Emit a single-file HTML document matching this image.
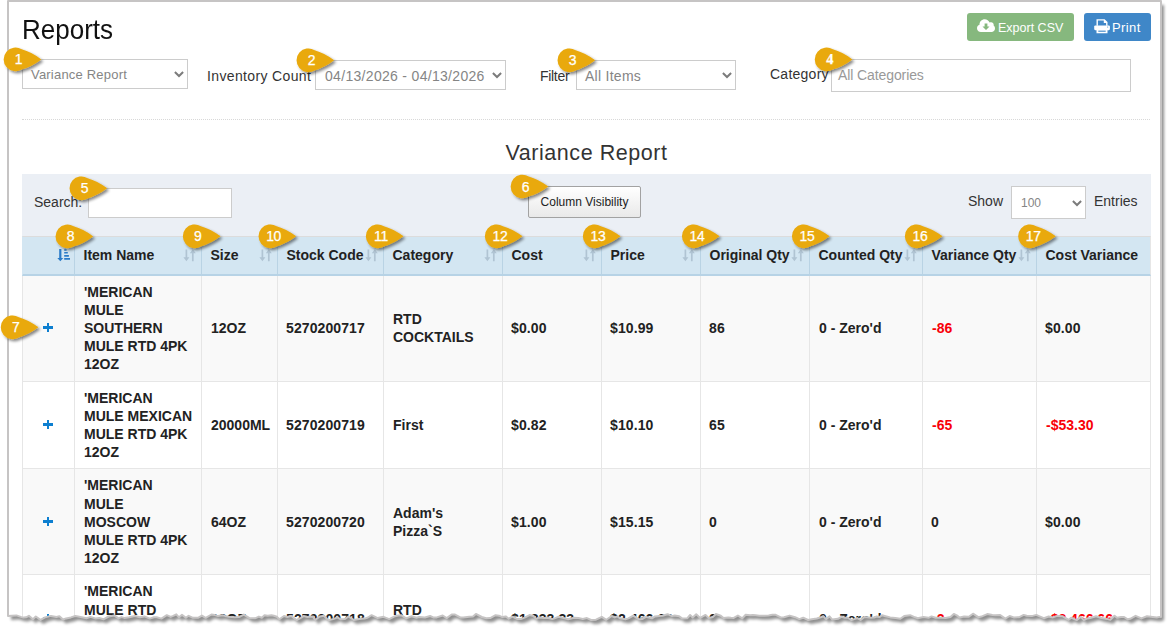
<!DOCTYPE html>
<html><head><meta charset="utf-8">
<style>
*{box-sizing:border-box;margin:0;padding:0}
html,body{width:1172px;height:633px;overflow:hidden;background:#fff}
body{font-family:"Liberation Sans",sans-serif;color:#333;position:relative}
.abs{position:absolute}
svg.full{position:absolute;left:0;top:0;width:1172px;height:633px;overflow:visible}
#page{position:absolute;left:0;top:0;width:1172px;height:633px;overflow:hidden;background:#fff;clip-path:path("M8.0 1.0 L1161.0 1.0 L1161.0 617.0 L1160.6 616.6 L1156.8 617.5 L1150.8 616.7 L1147.0 616.3 L1141.4 618.4 L1135.6 615.8 L1130.2 618.8 L1127.7 619.3 L1124.1 617.0 L1121.1 616.9 L1117.0 617.8 L1114.5 615.7 L1110.3 619.8 L1107.0 618.9 L1101.4 618.0 L1096.0 616.3 L1090.2 618.1 L1087.2 618.4 L1083.9 620.0 L1080.7 616.9 L1076.6 620.1 L1071.2 617.7 L1068.7 619.8 L1062.8 616.3 L1057.1 615.9 L1053.0 617.4 L1048.7 616.5 L1043.8 618.2 L1039.0 616.1 L1036.3 614.9 L1031.8 616.1 L1026.7 615.8 L1023.7 614.9 L1018.9 617.3 L1013.7 617.4 L1009.6 616.0 L1005.3 618.6 L1000.2 615.0 L995.2 615.2 L992.4 615.1 L987.3 614.1 L982.5 616.2 L978.3 617.2 L973.0 613.7 L968.8 616.8 L964.1 616.6 L959.6 617.6 L956.8 615.4 L953.8 613.9 L950.5 617.0 L945.6 617.9 L941.0 617.7 L935.7 617.8 L931.5 616.4 L928.5 617.8 L923.4 617.1 L917.8 618.2 L915.1 617.3 L910.1 615.2 L904.2 616.1 L900.3 618.8 L895.3 617.9 L890.2 617.4 L885.6 616.2 L882.0 615.3 L879.4 617.1 L876.6 616.5 L874.1 617.6 L870.9 617.7 L866.7 617.2 L864.2 617.1 L860.6 620.0 L857.3 618.1 L851.4 620.1 L847.9 617.7 L844.9 617.8 L841.4 616.8 L837.9 618.8 L832.3 619.6 L829.5 616.4 L826.1 619.1 L823.4 616.2 L820.7 617.2 L816.8 618.5 L811.8 619.3 L808.1 620.0 L803.2 617.7 L799.3 619.1 L795.1 617.2 L789.7 615.6 L784.0 617.2 L780.8 617.4 L775.7 614.8 L772.3 614.8 L768.6 615.4 L764.4 615.8 L759.2 615.8 L755.6 615.2 L753.0 615.0 L750.1 615.3 L745.7 614.7 L742.3 618.3 L737.9 615.5 L733.8 617.9 L731.0 617.8 L728.2 617.5 L723.5 618.1 L720.8 615.7 L715.9 614.0 L713.0 616.9 L708.5 617.9 L705.5 614.9 L700.2 617.9 L696.2 614.3 L692.7 617.4 L690.1 615.0 L687.2 618.3 L682.0 618.4 L679.2 616.3 L674.6 615.5 L672.0 616.1 L667.6 614.2 L662.5 615.7 L659.3 615.9 L655.0 616.4 L652.0 618.3 L646.0 616.9 L642.1 619.1 L638.9 619.3 L633.3 615.6 L628.4 618.4 L625.4 619.3 L620.2 618.3 L617.4 616.4 L614.7 617.4 L611.7 616.0 L606.3 619.8 L601.8 616.8 L596.0 619.7 L591.1 620.0 L586.9 618.1 L582.8 618.9 L578.5 618.0 L573.9 617.7 L568.2 619.2 L563.7 618.0 L558.5 616.8 L555.2 618.1 L552.3 619.1 L547.8 617.8 L544.2 617.9 L539.2 617.4 L536.1 618.9 L533.5 616.0 L529.5 615.1 L525.2 617.4 L520.9 619.1 L516.9 618.9 L512.4 616.7 L508.7 618.7 L505.7 616.4 L502.3 617.1 L499.0 615.7 L495.6 615.2 L490.2 618.1 L486.2 618.3 L481.8 617.0 L475.9 613.9 L473.0 616.4 L469.2 616.8 L463.3 617.5 L460.3 617.4 L454.6 614.4 L451.7 614.5 L446.7 618.1 L442.7 615.5 L436.8 617.4 L433.2 617.4 L430.1 616.0 L424.9 617.5 L419.2 617.0 L416.5 617.7 L411.7 616.3 L406.2 618.4 L401.5 615.3 L398.4 615.5 L395.1 616.2 L389.2 619.2 L383.5 616.8 L377.6 618.1 L374.2 616.3 L371.6 615.2 L367.9 617.5 L364.6 618.6 L359.2 619.0 L353.7 619.9 L348.4 616.5 L344.7 619.1 L340.4 619.2 L337.3 617.3 L333.9 618.9 L328.3 620.2 L324.0 615.8 L319.6 616.4 L315.2 620.1 L312.7 616.4 L307.3 616.9 L303.6 616.1 L300.8 617.8 L296.6 620.1 L291.2 616.0 L287.4 617.0 L284.0 616.0 L279.4 619.2 L276.8 616.8 L273.9 615.8 L271.4 615.3 L267.7 615.7 L264.5 615.2 L261.8 617.7 L258.9 616.6 L255.0 618.3 L249.5 618.1 L243.8 614.6 L239.0 617.1 L234.7 617.3 L228.8 616.7 L225.0 615.9 L222.5 615.2 L217.9 616.1 L214.6 614.9 L211.5 614.5 L205.7 617.8 L201.9 615.6 L198.4 617.7 L193.1 617.8 L188.6 615.8 L185.9 617.7 L182.0 614.9 L179.0 617.3 L176.3 614.3 L173.2 615.9 L170.7 616.9 L166.8 615.2 L161.4 618.6 L156.7 617.3 L154.0 617.2 L149.8 618.6 L144.4 616.4 L139.8 617.2 L134.9 616.0 L129.3 617.3 L124.2 617.9 L121.5 617.1 L118.5 618.4 L114.5 615.6 L108.6 616.5 L103.5 619.3 L99.2 618.0 L95.8 618.6 L90.6 616.9 L86.5 618.3 L82.9 617.6 L78.0 616.6 L75.3 616.0 L70.9 617.4 L66.1 618.4 L63.0 619.5 L59.4 616.2 L56.4 617.0 L50.9 615.9 L45.0 617.4 L40.5 619.9 L35.8 616.5 L32.9 619.2 L28.9 615.8 L26.1 617.3 L23.5 617.6 L20.8 616.9 L16.4 615.4 L11.6 615.7 L8.0 616.0 Z")}
h1{position:absolute;left:22px;top:15px;font-size:26px;font-weight:400;color:#111;line-height:30px;white-space:nowrap;transform:scaleY(1.055);transform-origin:0 23.7px}
.sel{position:absolute;border:1px solid #ccc;background:#fff;color:#858585;font-size:13px;line-height:29px;padding-left:8px;white-space:nowrap}
.sel svg{position:absolute;right:3.5px;top:11px}
.lbl{position:absolute;font-size:14px;color:#333;white-space:nowrap;line-height:18px}
.btn{position:absolute;color:#fff;font-size:12.5px;border-radius:3px;line-height:30px;white-space:nowrap}
#dots{position:absolute;left:22px;top:119px;width:1128px;border-top:1px dotted #d8d8d8}
h2{position:absolute;left:22px;width:1129px;top:138px;text-align:center;font-size:21.5px;letter-spacing:0.55px;font-weight:400;color:#333;line-height:31px}
#bar{position:absolute;left:22px;top:174px;width:1129px;height:63px;background:#ebeff5}
table{position:absolute;left:22px;top:236px;width:1129px;border-collapse:separate;border-spacing:0;table-layout:fixed;font-size:14px;font-weight:700;color:#222;letter-spacing:0}
th{background:#d3e6f2;height:39.65px;text-align:left;padding:0 0 1px 8.5px;border-left:1px solid #b9d3e4;border-bottom:2px solid #b7d3e6;border-top:1px solid #dcdcdc;position:relative;white-space:nowrap;vertical-align:middle}
th:first-child{border-left:1px solid #d3e6f2}
td{padding:7px 0 7px 9px;border-left:1px solid #e6e6e6;border-bottom:1px solid #e6e6e6;line-height:18.2px;vertical-align:middle}
td:last-child,th:last-child{border-right:1px solid #e6e6e6}
tr.o td{background:#f9f9f9}
.red{color:#f80008}
td.n{padding-left:8px;letter-spacing:0.1px}
th svg{position:absolute;right:4px;top:11.5px}
.plus{position:absolute;left:43px;width:10px;height:9px}
.plus:before{content:"";position:absolute;left:0;top:3.3px;width:10px;height:2.4px;background:#0d7fd0}
.plus:after{content:"";position:absolute;left:3.6px;top:0;width:2.9px;height:9px;background:#0d7fd0}
</style></head><body>
<svg class="full" style="z-index:0"><defs><filter id="fsh" x="-5%" y="-5%" width="110%" height="110%"><feGaussianBlur in="SourceAlpha" stdDeviation="1.8"/><feOffset dx="3.2" dy="4"/><feComponentTransfer><feFuncA type="linear" slope="0.44"/></feComponentTransfer></filter></defs>
<path d="M8.0 1.0 L1161.0 1.0 L1161.0 617.0 L1160.6 616.6 L1156.8 617.5 L1150.8 616.7 L1147.0 616.3 L1141.4 618.4 L1135.6 615.8 L1130.2 618.8 L1127.7 619.3 L1124.1 617.0 L1121.1 616.9 L1117.0 617.8 L1114.5 615.7 L1110.3 619.8 L1107.0 618.9 L1101.4 618.0 L1096.0 616.3 L1090.2 618.1 L1087.2 618.4 L1083.9 620.0 L1080.7 616.9 L1076.6 620.1 L1071.2 617.7 L1068.7 619.8 L1062.8 616.3 L1057.1 615.9 L1053.0 617.4 L1048.7 616.5 L1043.8 618.2 L1039.0 616.1 L1036.3 614.9 L1031.8 616.1 L1026.7 615.8 L1023.7 614.9 L1018.9 617.3 L1013.7 617.4 L1009.6 616.0 L1005.3 618.6 L1000.2 615.0 L995.2 615.2 L992.4 615.1 L987.3 614.1 L982.5 616.2 L978.3 617.2 L973.0 613.7 L968.8 616.8 L964.1 616.6 L959.6 617.6 L956.8 615.4 L953.8 613.9 L950.5 617.0 L945.6 617.9 L941.0 617.7 L935.7 617.8 L931.5 616.4 L928.5 617.8 L923.4 617.1 L917.8 618.2 L915.1 617.3 L910.1 615.2 L904.2 616.1 L900.3 618.8 L895.3 617.9 L890.2 617.4 L885.6 616.2 L882.0 615.3 L879.4 617.1 L876.6 616.5 L874.1 617.6 L870.9 617.7 L866.7 617.2 L864.2 617.1 L860.6 620.0 L857.3 618.1 L851.4 620.1 L847.9 617.7 L844.9 617.8 L841.4 616.8 L837.9 618.8 L832.3 619.6 L829.5 616.4 L826.1 619.1 L823.4 616.2 L820.7 617.2 L816.8 618.5 L811.8 619.3 L808.1 620.0 L803.2 617.7 L799.3 619.1 L795.1 617.2 L789.7 615.6 L784.0 617.2 L780.8 617.4 L775.7 614.8 L772.3 614.8 L768.6 615.4 L764.4 615.8 L759.2 615.8 L755.6 615.2 L753.0 615.0 L750.1 615.3 L745.7 614.7 L742.3 618.3 L737.9 615.5 L733.8 617.9 L731.0 617.8 L728.2 617.5 L723.5 618.1 L720.8 615.7 L715.9 614.0 L713.0 616.9 L708.5 617.9 L705.5 614.9 L700.2 617.9 L696.2 614.3 L692.7 617.4 L690.1 615.0 L687.2 618.3 L682.0 618.4 L679.2 616.3 L674.6 615.5 L672.0 616.1 L667.6 614.2 L662.5 615.7 L659.3 615.9 L655.0 616.4 L652.0 618.3 L646.0 616.9 L642.1 619.1 L638.9 619.3 L633.3 615.6 L628.4 618.4 L625.4 619.3 L620.2 618.3 L617.4 616.4 L614.7 617.4 L611.7 616.0 L606.3 619.8 L601.8 616.8 L596.0 619.7 L591.1 620.0 L586.9 618.1 L582.8 618.9 L578.5 618.0 L573.9 617.7 L568.2 619.2 L563.7 618.0 L558.5 616.8 L555.2 618.1 L552.3 619.1 L547.8 617.8 L544.2 617.9 L539.2 617.4 L536.1 618.9 L533.5 616.0 L529.5 615.1 L525.2 617.4 L520.9 619.1 L516.9 618.9 L512.4 616.7 L508.7 618.7 L505.7 616.4 L502.3 617.1 L499.0 615.7 L495.6 615.2 L490.2 618.1 L486.2 618.3 L481.8 617.0 L475.9 613.9 L473.0 616.4 L469.2 616.8 L463.3 617.5 L460.3 617.4 L454.6 614.4 L451.7 614.5 L446.7 618.1 L442.7 615.5 L436.8 617.4 L433.2 617.4 L430.1 616.0 L424.9 617.5 L419.2 617.0 L416.5 617.7 L411.7 616.3 L406.2 618.4 L401.5 615.3 L398.4 615.5 L395.1 616.2 L389.2 619.2 L383.5 616.8 L377.6 618.1 L374.2 616.3 L371.6 615.2 L367.9 617.5 L364.6 618.6 L359.2 619.0 L353.7 619.9 L348.4 616.5 L344.7 619.1 L340.4 619.2 L337.3 617.3 L333.9 618.9 L328.3 620.2 L324.0 615.8 L319.6 616.4 L315.2 620.1 L312.7 616.4 L307.3 616.9 L303.6 616.1 L300.8 617.8 L296.6 620.1 L291.2 616.0 L287.4 617.0 L284.0 616.0 L279.4 619.2 L276.8 616.8 L273.9 615.8 L271.4 615.3 L267.7 615.7 L264.5 615.2 L261.8 617.7 L258.9 616.6 L255.0 618.3 L249.5 618.1 L243.8 614.6 L239.0 617.1 L234.7 617.3 L228.8 616.7 L225.0 615.9 L222.5 615.2 L217.9 616.1 L214.6 614.9 L211.5 614.5 L205.7 617.8 L201.9 615.6 L198.4 617.7 L193.1 617.8 L188.6 615.8 L185.9 617.7 L182.0 614.9 L179.0 617.3 L176.3 614.3 L173.2 615.9 L170.7 616.9 L166.8 615.2 L161.4 618.6 L156.7 617.3 L154.0 617.2 L149.8 618.6 L144.4 616.4 L139.8 617.2 L134.9 616.0 L129.3 617.3 L124.2 617.9 L121.5 617.1 L118.5 618.4 L114.5 615.6 L108.6 616.5 L103.5 619.3 L99.2 618.0 L95.8 618.6 L90.6 616.9 L86.5 618.3 L82.9 617.6 L78.0 616.6 L75.3 616.0 L70.9 617.4 L66.1 618.4 L63.0 619.5 L59.4 616.2 L56.4 617.0 L50.9 615.9 L45.0 617.4 L40.5 619.9 L35.8 616.5 L32.9 619.2 L28.9 615.8 L26.1 617.3 L23.5 617.6 L20.8 616.9 L16.4 615.4 L11.6 615.7 L8.0 616.0 Z" fill="#000" filter="url(#fsh)"/></svg>
<div id="page">
<h1>Reports</h1>
<div class="sel" style="left:22px;top:59px;width:166px;height:30px;letter-spacing:0.2px">Variance Report<svg width="10" height="7" viewBox="0 0 10 7"><path d="M0.9 1 L5 5 L9.1 1" fill="none" stroke="#7c7c7c" stroke-width="2"/></svg></div>
<div class="lbl" style="left:207px;top:67px;letter-spacing:0.36px">Inventory Count</div>
<div class="sel" style="left:315px;top:60px;width:191px;height:30px;font-size:14px;letter-spacing:0.31px;padding-left:9px;line-height:31px">04/13/2026 - 04/13/2026<svg width="10" height="7" viewBox="0 0 10 7"><path d="M0.9 1 L5 5 L9.1 1" fill="none" stroke="#7c7c7c" stroke-width="2"/></svg></div>
<div class="lbl" style="left:540px;top:67px;letter-spacing:-0.3px">Filter</div>
<div class="sel" style="left:576px;top:60px;width:160px;height:30px;font-size:14px;letter-spacing:0.27px;padding-left:8px;line-height:31px">All Items<svg width="10" height="7" viewBox="0 0 10 7"><path d="M0.9 1 L5 5 L9.1 1" fill="none" stroke="#7c7c7c" stroke-width="2"/></svg></div>
<div class="lbl" style="left:770px;top:65px;letter-spacing:0.25px">Category</div>
<div class="sel" style="left:831px;top:59px;width:300px;height:33px;font-size:14px;line-height:30px;padding-left:6px;color:#999;letter-spacing:-0.1px">All Categories</div>
<div class="btn" style="left:967px;top:13px;width:107px;height:28px;background:#86b87e;padding-left:31px">Export CSV
<svg class="abs" style="left:10px;top:6px" width="18" height="14" viewBox="0 0 18 14"><path d="M4 13 C1.6 13 0 11.4 0 9.3 C0 7.6 1 6.3 2.5 5.8 C2.5 2.6 4.8 0.3 7.7 0.3 C10 0.3 11.8 1.6 12.6 3.6 C13.1 3.3 13.6 3.2 14.1 3.2 C15.6 3.2 16.7 4.4 16.7 5.8 C16.7 6.1 16.7 6.3 16.6 6.6 C17.5 7.2 18 8.2 18 9.4 C18 11.4 16.4 13 14.4 13 Z" fill="#fff"/><path d="M7.6 4.5 h2.8 v3 h2.1 l-3.5 3.6 l-3.5 -3.6 h2.1 z" fill="#86b87e"/></svg></div>
<div class="btn" style="left:1084px;top:13px;width:67px;height:28px;background:#3f87c8;padding-left:28px;font-size:13px;letter-spacing:0.4px">Print
<svg class="abs" style="left:9.5px;top:6px" width="16" height="15" viewBox="0 0 16 15"><path d="M2.5 6.8 V0.2 H10.6 L13.5 3.1 V6.8 H12.1 V3.9 H9.8 V1.6 H3.9 V6.8 Z" fill="#fff"/><rect x="0.2" y="6.4" width="15.7" height="4.8" rx="1.1" fill="#fff"/><path d="M2.5 10.5 H13.5 V14.3 H2.5 Z M4.3 11.4 V12.8 H11.7 V11.4 Z" fill="#fff" fill-rule="evenodd"/><circle cx="13.7" cy="8" r="0.55" fill="#3f87c8"/></svg></div>
<div id="dots"></div>
<h2>Variance Report</h2>
<div id="bar"></div>
<div class="lbl" style="left:34px;top:193px">Search:</div>
<div class="sel" style="left:88px;top:188px;width:144px;height:30px"></div>
<div class="abs" style="left:528px;top:186px;width:113px;height:32px;border:1px solid #a2a2a2;background:linear-gradient(#fff,#e9e9e9);border-radius:2px;font-size:12px;color:#222;text-align:center;line-height:30px;white-space:nowrap">Column Visibility</div>
<div class="lbl" style="left:968px;top:192px">Show</div>
<div class="sel" style="left:1011px;top:186px;width:75px;height:33px;line-height:32px;font-size:12px;padding-left:9px">100<svg style="top:13px" width="10" height="7" viewBox="0 0 10 7"><path d="M0.9 1 L5 5 L9.1 1" fill="none" stroke="#7c7c7c" stroke-width="2"/></svg></div>
<div class="lbl" style="left:1094px;top:192px">Entries</div>
<table>
<colgroup><col style="width:52px"><col style="width:127px"><col style="width:76px"><col style="width:106px"><col style="width:119px"><col style="width:99px"><col style="width:99px"><col style="width:109px"><col style="width:113px"><col style="width:114px"><col style="width:115px"></colgroup>
<tr><th><svg style="right:auto;left:34px;top:12px" width="14" height="13" viewBox="0 0 14 13"><path d="M2.2 0 h2.2 v9 h1.9 l-3 3.2 l-3 -3.2 h1.9 z M7.2 0.2 h2.4 v1.5 h-2.4 z M7.2 3 h3.6 v1.6 h-3.6 z M7.2 6 h4.7 v1.7 h-4.7 z M7.2 9 h5.8 v1.7 h-5.8 z" fill="#2a7bc8"/></svg></th><th>Item Name<svg width="14" height="13" viewBox="0 0 14 13"><path d="M3.4 0.4 V9.5 M9.8 12.2 V3" fill="none" stroke="#b0c4d3" stroke-width="1.7"/><path d="M0.4 8.3 H6.4 L3.4 12.3 Z M6.8 4.3 H12.8 L9.8 0.3 Z" fill="#b0c4d3"/></svg></th><th>Size<svg width="14" height="13" viewBox="0 0 14 13"><path d="M3.4 0.4 V9.5 M9.8 12.2 V3" fill="none" stroke="#b0c4d3" stroke-width="1.7"/><path d="M0.4 8.3 H6.4 L3.4 12.3 Z M6.8 4.3 H12.8 L9.8 0.3 Z" fill="#b0c4d3"/></svg></th><th>Stock Code<svg width="14" height="13" viewBox="0 0 14 13"><path d="M3.4 0.4 V9.5 M9.8 12.2 V3" fill="none" stroke="#b0c4d3" stroke-width="1.7"/><path d="M0.4 8.3 H6.4 L3.4 12.3 Z M6.8 4.3 H12.8 L9.8 0.3 Z" fill="#b0c4d3"/></svg></th><th>Category<svg width="14" height="13" viewBox="0 0 14 13"><path d="M3.4 0.4 V9.5 M9.8 12.2 V3" fill="none" stroke="#b0c4d3" stroke-width="1.7"/><path d="M0.4 8.3 H6.4 L3.4 12.3 Z M6.8 4.3 H12.8 L9.8 0.3 Z" fill="#b0c4d3"/></svg></th><th>Cost<svg width="14" height="13" viewBox="0 0 14 13"><path d="M3.4 0.4 V9.5 M9.8 12.2 V3" fill="none" stroke="#b0c4d3" stroke-width="1.7"/><path d="M0.4 8.3 H6.4 L3.4 12.3 Z M6.8 4.3 H12.8 L9.8 0.3 Z" fill="#b0c4d3"/></svg></th><th>Price<svg width="14" height="13" viewBox="0 0 14 13"><path d="M3.4 0.4 V9.5 M9.8 12.2 V3" fill="none" stroke="#b0c4d3" stroke-width="1.7"/><path d="M0.4 8.3 H6.4 L3.4 12.3 Z M6.8 4.3 H12.8 L9.8 0.3 Z" fill="#b0c4d3"/></svg></th><th>Original Qty<svg width="14" height="13" viewBox="0 0 14 13"><path d="M3.4 0.4 V9.5 M9.8 12.2 V3" fill="none" stroke="#b0c4d3" stroke-width="1.7"/><path d="M0.4 8.3 H6.4 L3.4 12.3 Z M6.8 4.3 H12.8 L9.8 0.3 Z" fill="#b0c4d3"/></svg></th><th>Counted Qty<svg width="14" height="13" viewBox="0 0 14 13"><path d="M3.4 0.4 V9.5 M9.8 12.2 V3" fill="none" stroke="#b0c4d3" stroke-width="1.7"/><path d="M0.4 8.3 H6.4 L3.4 12.3 Z M6.8 4.3 H12.8 L9.8 0.3 Z" fill="#b0c4d3"/></svg></th><th>Variance Qty<svg width="14" height="13" viewBox="0 0 14 13"><path d="M3.4 0.4 V9.5 M9.8 12.2 V3" fill="none" stroke="#b0c4d3" stroke-width="1.7"/><path d="M0.4 8.3 H6.4 L3.4 12.3 Z M6.8 4.3 H12.8 L9.8 0.3 Z" fill="#b0c4d3"/></svg></th><th>Cost Variance</th></tr>
<tr class="o"><td></td><td>'MERICAN<br>MULE<br>SOUTHERN<br>MULE RTD 4PK<br>12OZ</td><td>12OZ</td><td class="n">5270200717</td><td>RTD<br>COCKTAILS</td><td class="n">$0.00</td><td class="n">$10.99</td><td class="n">86</td><td>0 - Zero'd</td><td class="red">-86</td><td class="n">$0.00</td></tr>
<tr><td></td><td>'MERICAN<br>MULE MEXICAN<br>MULE RTD 4PK<br>12OZ</td><td>20000ML</td><td class="n">5270200719</td><td>First</td><td class="n">$0.82</td><td class="n">$10.10</td><td class="n">65</td><td>0 - Zero'd</td><td class="red">-65</td><td class="red">-$53.30</td></tr>
<tr class="o"><td></td><td>'MERICAN<br>MULE<br>MOSCOW<br>MULE RTD 4PK<br>12OZ</td><td>64OZ</td><td class="n">5270200720</td><td>Adam's<br>Pizza`S</td><td class="n">$1.00</td><td class="n">$15.15</td><td class="n">0</td><td>0 - Zero'd</td><td class="n">0</td><td class="n">$0.00</td></tr>
<tr><td></td><td>'MERICAN<br>MULE RTD<br>VARIETY 8PK<br>12OZ</td><td>12OZ</td><td class="n">5270200718</td><td>RTD<br>COCKTAILS</td><td class="n">$1,233.33</td><td class="n">$2,466.66</td><td class="n">2</td><td>0 - Zero'd</td><td class="red">-2</td><td class="red">-$2,466.66</td></tr>
</table>
<div class="plus" style="top:323px"></div>
<div class="plus" style="top:420px"></div>
<div class="plus" style="top:517px"></div>
<div class="plus" style="top:614px"></div>
</div>
<svg class="full" style="z-index:2"><defs><filter id="bsh" x="-30%" y="-30%" width="170%" height="170%"><feGaussianBlur in="SourceAlpha" stdDeviation="1.4" result="b"/><feOffset in="b" dx="2" dy="2.2" result="o"/><feComponentTransfer in="o" result="s"><feFuncA type="linear" slope="0.48"/></feComponentTransfer><feMerge><feMergeNode in="s"/><feMergeNode in="SourceGraphic"/></feMerge></filter></defs>
<path d="M8.0 1.0 L1161.0 1.0 L1161.0 617.0 L1160.6 616.6 L1156.8 617.5 L1150.8 616.7 L1147.0 616.3 L1141.4 618.4 L1135.6 615.8 L1130.2 618.8 L1127.7 619.3 L1124.1 617.0 L1121.1 616.9 L1117.0 617.8 L1114.5 615.7 L1110.3 619.8 L1107.0 618.9 L1101.4 618.0 L1096.0 616.3 L1090.2 618.1 L1087.2 618.4 L1083.9 620.0 L1080.7 616.9 L1076.6 620.1 L1071.2 617.7 L1068.7 619.8 L1062.8 616.3 L1057.1 615.9 L1053.0 617.4 L1048.7 616.5 L1043.8 618.2 L1039.0 616.1 L1036.3 614.9 L1031.8 616.1 L1026.7 615.8 L1023.7 614.9 L1018.9 617.3 L1013.7 617.4 L1009.6 616.0 L1005.3 618.6 L1000.2 615.0 L995.2 615.2 L992.4 615.1 L987.3 614.1 L982.5 616.2 L978.3 617.2 L973.0 613.7 L968.8 616.8 L964.1 616.6 L959.6 617.6 L956.8 615.4 L953.8 613.9 L950.5 617.0 L945.6 617.9 L941.0 617.7 L935.7 617.8 L931.5 616.4 L928.5 617.8 L923.4 617.1 L917.8 618.2 L915.1 617.3 L910.1 615.2 L904.2 616.1 L900.3 618.8 L895.3 617.9 L890.2 617.4 L885.6 616.2 L882.0 615.3 L879.4 617.1 L876.6 616.5 L874.1 617.6 L870.9 617.7 L866.7 617.2 L864.2 617.1 L860.6 620.0 L857.3 618.1 L851.4 620.1 L847.9 617.7 L844.9 617.8 L841.4 616.8 L837.9 618.8 L832.3 619.6 L829.5 616.4 L826.1 619.1 L823.4 616.2 L820.7 617.2 L816.8 618.5 L811.8 619.3 L808.1 620.0 L803.2 617.7 L799.3 619.1 L795.1 617.2 L789.7 615.6 L784.0 617.2 L780.8 617.4 L775.7 614.8 L772.3 614.8 L768.6 615.4 L764.4 615.8 L759.2 615.8 L755.6 615.2 L753.0 615.0 L750.1 615.3 L745.7 614.7 L742.3 618.3 L737.9 615.5 L733.8 617.9 L731.0 617.8 L728.2 617.5 L723.5 618.1 L720.8 615.7 L715.9 614.0 L713.0 616.9 L708.5 617.9 L705.5 614.9 L700.2 617.9 L696.2 614.3 L692.7 617.4 L690.1 615.0 L687.2 618.3 L682.0 618.4 L679.2 616.3 L674.6 615.5 L672.0 616.1 L667.6 614.2 L662.5 615.7 L659.3 615.9 L655.0 616.4 L652.0 618.3 L646.0 616.9 L642.1 619.1 L638.9 619.3 L633.3 615.6 L628.4 618.4 L625.4 619.3 L620.2 618.3 L617.4 616.4 L614.7 617.4 L611.7 616.0 L606.3 619.8 L601.8 616.8 L596.0 619.7 L591.1 620.0 L586.9 618.1 L582.8 618.9 L578.5 618.0 L573.9 617.7 L568.2 619.2 L563.7 618.0 L558.5 616.8 L555.2 618.1 L552.3 619.1 L547.8 617.8 L544.2 617.9 L539.2 617.4 L536.1 618.9 L533.5 616.0 L529.5 615.1 L525.2 617.4 L520.9 619.1 L516.9 618.9 L512.4 616.7 L508.7 618.7 L505.7 616.4 L502.3 617.1 L499.0 615.7 L495.6 615.2 L490.2 618.1 L486.2 618.3 L481.8 617.0 L475.9 613.9 L473.0 616.4 L469.2 616.8 L463.3 617.5 L460.3 617.4 L454.6 614.4 L451.7 614.5 L446.7 618.1 L442.7 615.5 L436.8 617.4 L433.2 617.4 L430.1 616.0 L424.9 617.5 L419.2 617.0 L416.5 617.7 L411.7 616.3 L406.2 618.4 L401.5 615.3 L398.4 615.5 L395.1 616.2 L389.2 619.2 L383.5 616.8 L377.6 618.1 L374.2 616.3 L371.6 615.2 L367.9 617.5 L364.6 618.6 L359.2 619.0 L353.7 619.9 L348.4 616.5 L344.7 619.1 L340.4 619.2 L337.3 617.3 L333.9 618.9 L328.3 620.2 L324.0 615.8 L319.6 616.4 L315.2 620.1 L312.7 616.4 L307.3 616.9 L303.6 616.1 L300.8 617.8 L296.6 620.1 L291.2 616.0 L287.4 617.0 L284.0 616.0 L279.4 619.2 L276.8 616.8 L273.9 615.8 L271.4 615.3 L267.7 615.7 L264.5 615.2 L261.8 617.7 L258.9 616.6 L255.0 618.3 L249.5 618.1 L243.8 614.6 L239.0 617.1 L234.7 617.3 L228.8 616.7 L225.0 615.9 L222.5 615.2 L217.9 616.1 L214.6 614.9 L211.5 614.5 L205.7 617.8 L201.9 615.6 L198.4 617.7 L193.1 617.8 L188.6 615.8 L185.9 617.7 L182.0 614.9 L179.0 617.3 L176.3 614.3 L173.2 615.9 L170.7 616.9 L166.8 615.2 L161.4 618.6 L156.7 617.3 L154.0 617.2 L149.8 618.6 L144.4 616.4 L139.8 617.2 L134.9 616.0 L129.3 617.3 L124.2 617.9 L121.5 617.1 L118.5 618.4 L114.5 615.6 L108.6 616.5 L103.5 619.3 L99.2 618.0 L95.8 618.6 L90.6 616.9 L86.5 618.3 L82.9 617.6 L78.0 616.6 L75.3 616.0 L70.9 617.4 L66.1 618.4 L63.0 619.5 L59.4 616.2 L56.4 617.0 L50.9 615.9 L45.0 617.4 L40.5 619.9 L35.8 616.5 L32.9 619.2 L28.9 615.8 L26.1 617.3 L23.5 617.6 L20.8 616.9 L16.4 615.4 L11.6 615.7 L8.0 616.0 Z" fill="none" stroke="#c6c4c4" stroke-width="2" stroke-linejoin="round"/>
<g transform="translate(15.5 59.4)"><path d="M25.8 0 Q16 -7.4 6.2 -10.1 A11.85 11.85 0 1 0 6.2 10.1 Q16 7.4 25.8 0 Z" fill="#e9a90d" filter="url(#bsh)"/><text x="3.2" y="5" text-anchor="middle" fill="#fff" stroke="#fff" stroke-width="0.25" font-family="Liberation Sans" font-size="14">1</text></g>
<g transform="translate(308.4 60.3)"><path d="M25.8 0 Q16 -7.4 6.2 -10.1 A11.85 11.85 0 1 0 6.2 10.1 Q16 7.4 25.8 0 Z" fill="#e9a90d" filter="url(#bsh)"/><text x="3.2" y="5" text-anchor="middle" fill="#fff" stroke="#fff" stroke-width="0.25" font-family="Liberation Sans" font-size="14">2</text></g>
<g transform="translate(569.4 60.3)"><path d="M25.8 0 Q16 -7.4 6.2 -10.1 A11.85 11.85 0 1 0 6.2 10.1 Q16 7.4 25.8 0 Z" fill="#e9a90d" filter="url(#bsh)"/><text x="3.2" y="5" text-anchor="middle" fill="#fff" stroke="#fff" stroke-width="0.25" font-family="Liberation Sans" font-size="14">3</text></g>
<g transform="translate(826.6 59.4)"><path d="M25.8 0 Q16 -7.4 6.2 -10.1 A11.85 11.85 0 1 0 6.2 10.1 Q16 7.4 25.8 0 Z" fill="#e9a90d" filter="url(#bsh)"/><text x="3.2" y="5" text-anchor="middle" fill="#fff" stroke="#fff" stroke-width="0.25" font-family="Liberation Serif" font-weight="700" font-size="14.5">4</text></g>
<g transform="translate(81.4 188.3)"><path d="M25.8 0 Q16 -7.4 6.2 -10.1 A11.85 11.85 0 1 0 6.2 10.1 Q16 7.4 25.8 0 Z" fill="#e9a90d" filter="url(#bsh)"/><text x="3.2" y="5" text-anchor="middle" fill="#fff" stroke="#fff" stroke-width="0.25" font-family="Liberation Sans" font-size="14">5</text></g>
<g transform="translate(522.5 186.5)"><path d="M25.8 0 Q16 -7.4 6.2 -10.1 A11.85 11.85 0 1 0 6.2 10.1 Q16 7.4 25.8 0 Z" fill="#e9a90d" filter="url(#bsh)"/><text x="3.2" y="5" text-anchor="middle" fill="#fff" stroke="#fff" stroke-width="0.25" font-family="Liberation Sans" font-size="14">6</text></g>
<g transform="translate(12.6 327.3)"><path d="M25.8 0 Q16 -7.4 6.2 -10.1 A11.85 11.85 0 1 0 6.2 10.1 Q16 7.4 25.8 0 Z" fill="#e9a90d" filter="url(#bsh)"/><text x="3.2" y="5" text-anchor="middle" fill="#fff" stroke="#fff" stroke-width="0.25" font-family="Liberation Sans" font-size="14">7</text></g>
<g transform="translate(67.4 236.4)"><path d="M25.8 0 Q16 -7.4 6.2 -10.1 A11.85 11.85 0 1 0 6.2 10.1 Q16 7.4 25.8 0 Z" fill="#e9a90d" filter="url(#bsh)"/><text x="3.2" y="5" text-anchor="middle" fill="#fff" stroke="#fff" stroke-width="0.25" font-family="Liberation Sans" font-size="14">8</text></g>
<g transform="translate(194.7 236.3)"><path d="M25.8 0 Q16 -7.4 6.2 -10.1 A11.85 11.85 0 1 0 6.2 10.1 Q16 7.4 25.8 0 Z" fill="#e9a90d" filter="url(#bsh)"/><text x="3.2" y="5" text-anchor="middle" fill="#fff" stroke="#fff" stroke-width="0.25" font-family="Liberation Sans" font-size="14">9</text></g>
<g transform="translate(270.4 236.3)"><path d="M25.8 0 Q16 -7.4 6.2 -10.1 A11.85 11.85 0 1 0 6.2 10.1 Q16 7.4 25.8 0 Z" fill="#e9a90d" filter="url(#bsh)"/><text x="3.2" y="5" text-anchor="middle" fill="#fff" stroke="#fff" stroke-width="0.25" letter-spacing="-0.4" font-family="Liberation Sans" font-size="14">10</text></g>
<g transform="translate(377.7 236.3)"><path d="M25.8 0 Q16 -7.4 6.2 -10.1 A11.85 11.85 0 1 0 6.2 10.1 Q16 7.4 25.8 0 Z" fill="#e9a90d" filter="url(#bsh)"/><text x="3.2" y="5" text-anchor="middle" fill="#fff" stroke="#fff" stroke-width="0.25" letter-spacing="-0.4" font-family="Liberation Sans" font-size="14">11</text></g>
<g transform="translate(496.7 236.3)"><path d="M25.8 0 Q16 -7.4 6.2 -10.1 A11.85 11.85 0 1 0 6.2 10.1 Q16 7.4 25.8 0 Z" fill="#e9a90d" filter="url(#bsh)"/><text x="3.2" y="5" text-anchor="middle" fill="#fff" stroke="#fff" stroke-width="0.25" letter-spacing="-0.4" font-family="Liberation Sans" font-size="14">12</text></g>
<g transform="translate(594.7 236.3)"><path d="M25.8 0 Q16 -7.4 6.2 -10.1 A11.85 11.85 0 1 0 6.2 10.1 Q16 7.4 25.8 0 Z" fill="#e9a90d" filter="url(#bsh)"/><text x="3.2" y="5" text-anchor="middle" fill="#fff" stroke="#fff" stroke-width="0.25" letter-spacing="-0.4" font-family="Liberation Sans" font-size="14">13</text></g>
<g transform="translate(693.8 236.3)"><path d="M25.8 0 Q16 -7.4 6.2 -10.1 A11.85 11.85 0 1 0 6.2 10.1 Q16 7.4 25.8 0 Z" fill="#e9a90d" filter="url(#bsh)"/><text x="3.2" y="5" text-anchor="middle" fill="#fff" stroke="#fff" stroke-width="0.25" letter-spacing="-0.4" font-family="Liberation Sans" font-size="14">14</text></g>
<g transform="translate(803.8 236.3)"><path d="M25.8 0 Q16 -7.4 6.2 -10.1 A11.85 11.85 0 1 0 6.2 10.1 Q16 7.4 25.8 0 Z" fill="#e9a90d" filter="url(#bsh)"/><text x="3.2" y="5" text-anchor="middle" fill="#fff" stroke="#fff" stroke-width="0.25" letter-spacing="-0.4" font-family="Liberation Sans" font-size="14">15</text></g>
<g transform="translate(916.7 236.3)"><path d="M25.8 0 Q16 -7.4 6.2 -10.1 A11.85 11.85 0 1 0 6.2 10.1 Q16 7.4 25.8 0 Z" fill="#e9a90d" filter="url(#bsh)"/><text x="3.2" y="5" text-anchor="middle" fill="#fff" stroke="#fff" stroke-width="0.25" letter-spacing="-0.4" font-family="Liberation Sans" font-size="14">16</text></g>
<g transform="translate(1030.0 236.3)"><path d="M25.8 0 Q16 -7.4 6.2 -10.1 A11.85 11.85 0 1 0 6.2 10.1 Q16 7.4 25.8 0 Z" fill="#e9a90d" filter="url(#bsh)"/><text x="3.2" y="5" text-anchor="middle" fill="#fff" stroke="#fff" stroke-width="0.25" letter-spacing="-0.4" font-family="Liberation Sans" font-size="14">17</text></g>
</svg>
</body></html>
